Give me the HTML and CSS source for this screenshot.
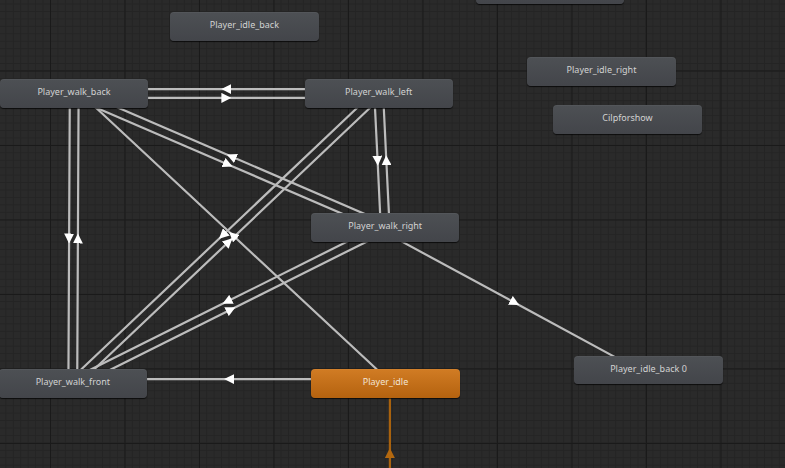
FILE: index.html
```html
<!DOCTYPE html>
<html lang="en">

<head>
    <meta charset="UTF-8">
    <title>Animator</title>
    <link rel="stylesheet" href="styles.css">
</head>

<body>
    <div class="graph">
        <svg class="links" width="785" height="468" viewBox="0 0 785 468">
            <defs>
                <marker id="arrow" viewBox="0 0 10 10" refX="5" refY="5" markerWidth="10" markerHeight="10"
                    markerUnits="userSpaceOnUse" orient="auto">
                    <path d="M0,0 L10,5 L0,10 z" fill="#ffffff" />
                </marker>
                <marker id="arrow-entry" viewBox="0 0 10 10" refX="5" refY="5" markerWidth="10" markerHeight="10"
                    markerUnits="userSpaceOnUse" orient="auto">
                    <path d="M0,0 L10,5 L0,10 z" fill="#b3680f" />
                </marker>
            </defs>

            <!-- walk_back <-> walk_left -->
            <polyline class="link" points="74.2,97.9 226.4,97.9 378.7,97.9" />
            <polyline class="link" points="378.7,89.1 226.4,89.1 74.2,89.1" />
            <!-- walk_back <-> walk_front -->
            <polyline class="link" points="69.8,93.5 69.1,238.5 68.4,383.5" />
            <polyline class="link" points="77.2,383.5 77.9,238.5 78.6,93.5" />
            <!-- walk_left <-> walk_right -->
            <polyline class="link" points="374.3,93.7 377.6,160.7 380.8,227.7" />
            <polyline class="link" points="389.6,227.3 386.3,160.3 383.1,93.3" />
            <!-- walk_back <-> walk_right -->
            <polyline class="link" points="72.5,97.5 228,164.5 383.5,231.5" />
            <polyline class="link" points="386.9,223.5 231.4,156.5 75.9,89.5" />
            <!-- walk_left <-> walk_front -->
            <polyline class="link" points="375.7,90.3 222.7,235.3 69.8,380.3" />
            <polyline class="link" points="75.8,386.7 228.8,241.7 381.7,96.7" />
            <!-- idle -> walk_back -->
            <polyline class="link" points="388.5,380.3 232.8,235.3 77.2,90.3" />
            <!-- walk_right <-> walk_front -->
            <polyline class="link" points="383.2,223.6 227,301.6 70.8,379.6" />
            <polyline class="link" points="74.8,387.4 231,309.4 387.2,231.4" />
            <!-- idle -> walk_front -->
            <polyline class="link" points="385.5,379.1 229.1,379.1 72.8,379.1" />
            <!-- walk_right -> idle_back 0 -->
            <polyline class="link" points="383.1,231.4 514.8,302.7 646.4,374.1" />
            <!-- entry -> idle -->
            <polyline class="link entry" points="389.9,522.5 389.9,453 389.9,383.5" />
        </svg>

        <div class="state s-top"></div>
        <div class="state s-idle-back">Player_idle_back</div>
        <div class="state s-walk-back">Player_walk_back</div>
        <div class="state s-walk-left">Player_walk_left</div>
        <div class="state s-idle-right">Player_idle_right</div>
        <div class="state s-clip">Cilpforshow</div>
        <div class="state s-walk-right">Player_walk_right</div>
        <div class="state s-walk-front">Player_walk_front</div>
        <div class="state default s-idle">Player_idle</div>
        <div class="state s-idle-back0">Player_idle_back 0</div>
    </div>
</body>

</html>
```

FILE: styles.css
```css
body {
    margin: 0;
    background-color: #2a2a2a;
    font-family: "Noto Sans", "Open Sans", sans-serif;
}

.graph {
    position: relative;
    width: 785px;
    height: 468px;
    overflow: hidden;
    background-color: #2a2a2a;
    background-image:
        linear-gradient(to right, #1a1a1a 1px, transparent 1px),
        linear-gradient(to bottom, #1a1a1a 1px, transparent 1px),
        linear-gradient(to right, #242424 1px, transparent 1px),
        linear-gradient(to bottom, #242424 1px, transparent 1px);
    background-size: 74.5px 74.5px, 74.5px 74.5px, 7.45px 7.45px, 7.45px 7.45px;
    background-position: 50px 70.5px;
}

.links {
    position: absolute;
    left: 0;
    top: 0;
}

.link {
    fill: none;
    stroke: #bcbcbc;
    stroke-width: 2.2;
    marker-mid: url(#arrow);
}

.link.entry {
    stroke: #a8620e;
    marker-mid: url(#arrow-entry);
}

.state {
    position: absolute;
    width: 148.4px;
    height: 28.4px;
    box-sizing: border-box;
    border-radius: 4px;
    background: linear-gradient(#4d5054, #43454a);
    box-shadow: 0 1px 1px rgba(0, 0, 0, 0.7), inset 0 1px 0 rgba(255, 255, 255, 0.04);
    color: #d2d2d2;
    font-size: 9px;
    display: flex;
    align-items: center;
    justify-content: center;
    padding-bottom: 3px;
    white-space: nowrap;
}

.state.default {
    background: linear-gradient(#d17c24, #b4620f);
    color: #f2e4d6;
}

/* node positions on the canvas */
.s-top {
    left: 475.7px;
    top: -24.5px;
}

.s-idle-back {
    left: 170.2px;
    top: 12.3px;
}

.s-walk-back {
    left: -0.2px;
    top: 79.3px;
}

.s-walk-left {
    left: 304.5px;
    top: 79.3px;
}

.s-idle-right {
    left: 527.3px;
    top: 57.3px;
}

.s-clip {
    left: 553.3px;
    top: 105.3px;
}

.s-walk-right {
    left: 311px;
    top: 213.3px;
}

.s-walk-front {
    left: -1.4px;
    top: 369.3px;
}

.s-idle {
    left: 311.3px;
    top: 369.3px;
}

.s-idle-back0 {
    left: 574.3px;
    top: 356px;
}
```
